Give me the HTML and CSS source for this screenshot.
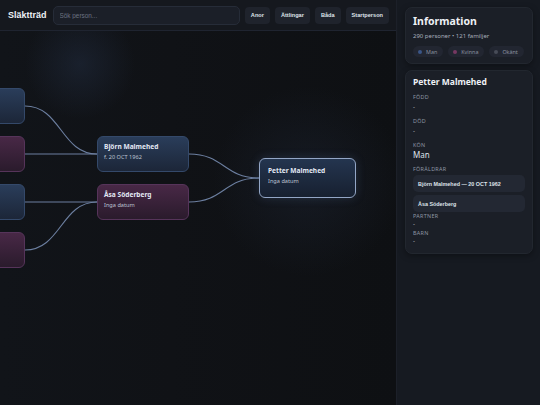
FILE: index.html
```html
<!DOCTYPE html>
<html lang="sv">
<head>
  <meta charset="UTF-8">
  <title>Släktträd</title>
  <meta name="viewport" content="width=device-width, initial-scale=1.0">
  <link rel="stylesheet" href="styles.css">
</head>
<body>
  <div class="huvud">
    <header class="topp">
      <h1>Släktträd</h1>
      <input type="text" class="sok" placeholder="Sök person...">
      <button class="knapp">Anor</button>
      <button class="knapp">Ättlingar</button>
      <button class="knapp">Båda</button>
      <button class="knapp">Startperson</button>
    </header>

    <div class="duk">
      <svg class="lankar" width="396" height="374">
        <path d="M25,75 C61,75 61,123 97,123"/>
        <path d="M25,123 L97,123"/>
        <path d="M25,171 L97,171"/>
        <path d="M25,219 C61,219 61,171 97,171"/>
        <path d="M189,123 C224,123 224,147 259,147"/>
        <path d="M189,171 C224,171 224,147 259,147"/>
      </svg>

      <div class="nod man" style="left:-67px; top:57px"></div>
      <div class="nod kvinna" style="left:-67px; top:105px"></div>
      <div class="nod man" style="left:-67px; top:153px"></div>
      <div class="nod kvinna" style="left:-67px; top:201px"></div>

      <div class="nod man" style="left:97px; top:105px">
        <div class="namn">Björn Malmehed</div>
        <div class="datum">f. 20 OCT 1962</div>
      </div>
      <div class="nod kvinna" style="left:97px; top:153px">
        <div class="namn">Åsa Söderberg</div>
        <div class="datum">Inga datum</div>
      </div>
      <div class="nod man vald" style="left:259px; top:127px">
        <div class="namn">Petter Malmehed</div>
        <div class="datum">Inga datum</div>
      </div>
    </div>
  </div>

  <aside class="sida">
    <section class="kort">
      <h2>Information</h2>
      <p class="statistik">290 personer • 121 familjer</p>
      <div class="chips">
        <span class="chip"><i class="prick bla"></i>Man</span>
        <span class="chip"><i class="prick rosa"></i>Kvinna</span>
        <span class="chip"><i class="prick gra"></i>Okänt</span>
      </div>
    </section>

    <section class="kort person">
      <h3>Petter Malmehed</h3>
      <div class="falt forst">
        <div class="etikett">Född</div>
        <div class="varde">-</div>
      </div>
      <div class="falt">
        <div class="etikett">Död</div>
        <div class="varde">-</div>
      </div>
      <div class="falt">
        <div class="etikett">Kön</div>
        <div class="varde stor">Man</div>
      </div>
      <div class="falt">
        <div class="etikett">Föräldrar</div>
        <div class="post">Björn Malmehed — 20 OCT 1962</div>
        <div class="post">Åsa Söderberg</div>
      </div>
      <div class="falt tat">
        <div class="etikett">Partner</div>
        <div class="varde">-</div>
      </div>
      <div class="falt tat">
        <div class="etikett">Barn</div>
        <div class="varde">-</div>
      </div>
    </section>
  </aside>
</body>
</html>
```

FILE: styles.css
```css
* {
  box-sizing: border-box;
}
body {
  margin: 0;
  width: 540px;
  height: 405px;
  overflow: hidden;
  display: flex;
  background: #0f1115;
  color: #e6e9ef;
  font-family: "Noto Sans", "DejaVu Sans", sans-serif;
}
.huvud {
  width: 396px;
  display: flex;
  flex-direction: column;
}
.topp {
  height: 31px;
  display: flex;
  align-items: center;
  gap: 5px;
  padding: 0 7px 0 8px;
  background: #15181e;
  border-bottom: 1px solid #1f2430;
}
.topp h1 {
  margin: 0 1px 0 0;
  font-family: "Liberation Sans", sans-serif;
  font-size: 9px;
  font-weight: 700;
  color: #eef1f6;
}
.sok {
  width: 191px;
  height: 19px;
  padding: 0 6px;
  border-radius: 5px;
  border: 1px solid #262c38;
  background: #1b1f28;
  color: #cfd5df;
  font-family: "Liberation Sans", sans-serif;
  font-size: 6.4px;
}
.sok::placeholder {
  color: #6b7382;
}
.knapp {
  height: 17px;
  padding: 0 6px;
  border: none;
  border-radius: 4px;
  background: #1f232c;
  color: #dfe3ea;
  font-family: "Liberation Sans", sans-serif;
  font-size: 5.6px;
  font-weight: 700;
}
.duk {
  position: relative;
  flex: 1;
  overflow: hidden;
  background:
    radial-gradient(circle at 80px 33px, rgba(36, 48, 70, 0.45), transparent 55px),
    radial-gradient(circle at 308px 150px, rgba(30, 38, 54, 0.45), transparent 95px),
    linear-gradient(90deg, #111419 0, #101216 170px, #0e1013 100%);
}
.lankar {
  position: absolute;
  left: 0;
  top: 0;
}
.lankar path {
  fill: none;
  stroke: #6c7fa0;
  stroke-width: 1.1;
}
.nod {
  position: absolute;
  width: 92px;
  height: 36px;
  padding: 5px 6px;
  border-radius: 6px;
}
.nod.man {
  background: linear-gradient(180deg, #2a3d5a, #1c2638);
  border: 1px solid #34496a;
}
.nod.kvinna {
  background: linear-gradient(180deg, #482846, #2a1b2c);
  border: 1px solid #56345a;
}
.nod.vald {
  width: 97px;
  height: 40px;
  padding: 7px 8px;
  border: 1px solid #93a6c6;
  background: linear-gradient(180deg, #24354f, #172030);
  box-shadow: 0 0 10px rgba(90, 120, 170, 0.25);
}
.namn {
  font-size: 6.6px;
  font-weight: 700;
  color: #e2e8f4;
  line-height: 10px;
}
.datum {
  font-size: 5.6px;
  color: #bcc4d2;
  line-height: 10px;
}
.sida {
  width: 144px;
  padding: 7px 7px 0 8px;
  background: #161a21;
  border-left: 1px solid #1c2029;
}
.kort {
  background: #1b1f27;
  border: 1px solid #22272f;
  border-radius: 7px;
  padding: 5px 7px 6px;
  box-shadow: 0 2px 6px rgba(0, 0, 0, 0.35);
}
.kort h2 {
  margin: 0;
  font-size: 10.5px;
  line-height: 16px;
  font-weight: 700;
  color: #eef1f6;
}
.statistik {
  margin: 3px 0 0;
  font-size: 6px;
  line-height: 9px;
  color: #a7aebb;
}
.chips {
  display: flex;
  gap: 5px;
  margin-top: 5px;
}
.chip {
  display: flex;
  align-items: center;
  gap: 4px;
  height: 11px;
  padding: 0 6px 0 5px;
  border-radius: 6px;
  background: #222631;
  font-size: 5.4px;
  color: #8a92a0;
}
.prick {
  width: 4px;
  height: 4px;
  border-radius: 50%;
}
.prick.bla { background: #3a5687; }
.prick.rosa { background: #763862; }
.prick.gra { background: #474c58; }
.person {
  margin-top: 6px;
  padding: 5px 7px 7px;
}
.person h3 {
  margin: 0;
  font-size: 8.5px;
  line-height: 12px;
  font-weight: 700;
  color: #eef1f6;
}
.falt {
  margin-top: 4px;
}
.falt.forst {
  margin-top: 5px;
}
.etikett {
  font-size: 5.4px;
  line-height: 8px;
  letter-spacing: 0.3px;
  text-transform: uppercase;
  color: #8e96a4;
}
.varde {
  font-size: 6px;
  line-height: 12px;
  color: #c9cfd9;
}
.varde.stor {
  font-size: 8px;
  color: #dfe3ea;
}
.post {
  margin-top: 2px;
  height: 17px;
  display: flex;
  align-items: center;
  padding: 0 5px;
  border-radius: 5px;
  background: #232833;
  font-family: "Liberation Sans", sans-serif;
  font-size: 5.4px;
  font-weight: 700;
  color: #dfe3ea;
}
.post + .post {
  margin-top: 3px;
}
.falt.tat {
  margin-top: 0;
}
.falt.tat .varde {
  line-height: 9px;
}
```
